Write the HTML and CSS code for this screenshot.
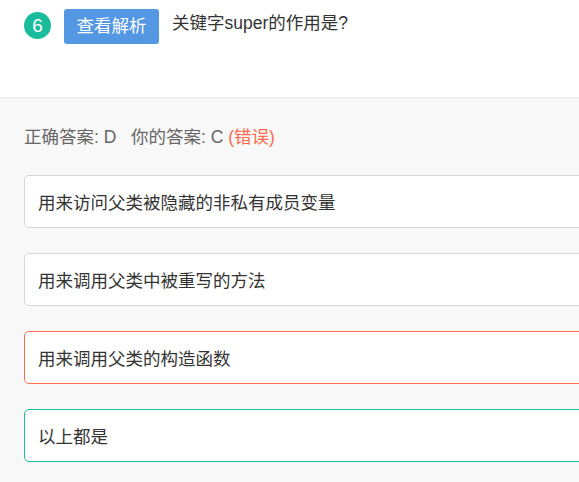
FILE: index.html
```html
<!DOCTYPE html>
<html lang="zh">
<head>
<meta charset="utf-8">
<link rel="stylesheet" href="styles.css">
</head>
<body>
<div class="page">
  <div class="question">
    <span class="num">6</span>
    <span class="btn">查看解析</span>
    <span class="title">关键字super的作用是?</span>
  </div>
  <div class="answers">
    <div class="result">正确答案: D&nbsp;&nbsp;&nbsp;你的答案: C <span class="wrong">(错误)</span></div>
    <div class="options">
      <div class="opt">用来访问父类被隐藏的非私有成员变量</div>
      <div class="opt">用来调用父类中被重写的方法</div>
      <div class="opt opt-wrong">用来调用父类的构造函数</div>
      <div class="opt opt-right">以上都是</div>
    </div>
  </div>
</div>
</body>
</html>
```
FILE: styles.css
```css
html, body {
  margin: 0;
  padding: 0;
  overflow: hidden;
  background: #f8f8f8;
}
.page {
  width: 620px;
  font-family: "Liberation Sans", "Noto Sans CJK SC", sans-serif;
  font-size: 17.5px;
  color: #333;
}
.question {
  height: 98px;
  box-sizing: border-box;
  background: #fff;
  border-bottom: 1px solid #eaeaea;
  display: flex;
  align-items: flex-start;
  padding: 9px 0 0 24px;
}
.num {
  width: 27px;
  height: 27px;
  margin-top: 3px;
  border-radius: 50%;
  background: #1bbc9b;
  color: #fff;
  font-size: 19px;
  line-height: 27px;
  text-align: center;
}
.btn {
  margin-left: 13px;
  width: 95px;
  height: 35px;
  border-radius: 3px;
  background: #5497e3;
  color: #fff;
  font-size: 17.5px;
  line-height: 35px;
  text-align: center;
}
.title {
  margin-left: 13px;
  font-size: 17.5px;
  line-height: 28px;
}
.answers {
  padding: 27px 0 0 24px;
}
.result {
  font-size: 17.5px;
  line-height: 24px;
  color: #666;
}
.wrong {
  color: #ff6b4d;
}
.options {
  display: flex;
  flex-direction: column;
  gap: 25px;
  margin-top: 26px;
}
.opt {
  width: 600px;
  height: 53px;
  box-sizing: border-box;
  background: #fff;
  border: 1px solid #d6d6d6;
  border-radius: 5px;
  padding-left: 13px;
  display: flex;
  align-items: center;
  font-size: 17.5px;
  color: #333;
}
.opt-wrong {
  border-color: #ff6b4d;
}
.opt-right {
  border-color: #1bbc9b;
}
```
